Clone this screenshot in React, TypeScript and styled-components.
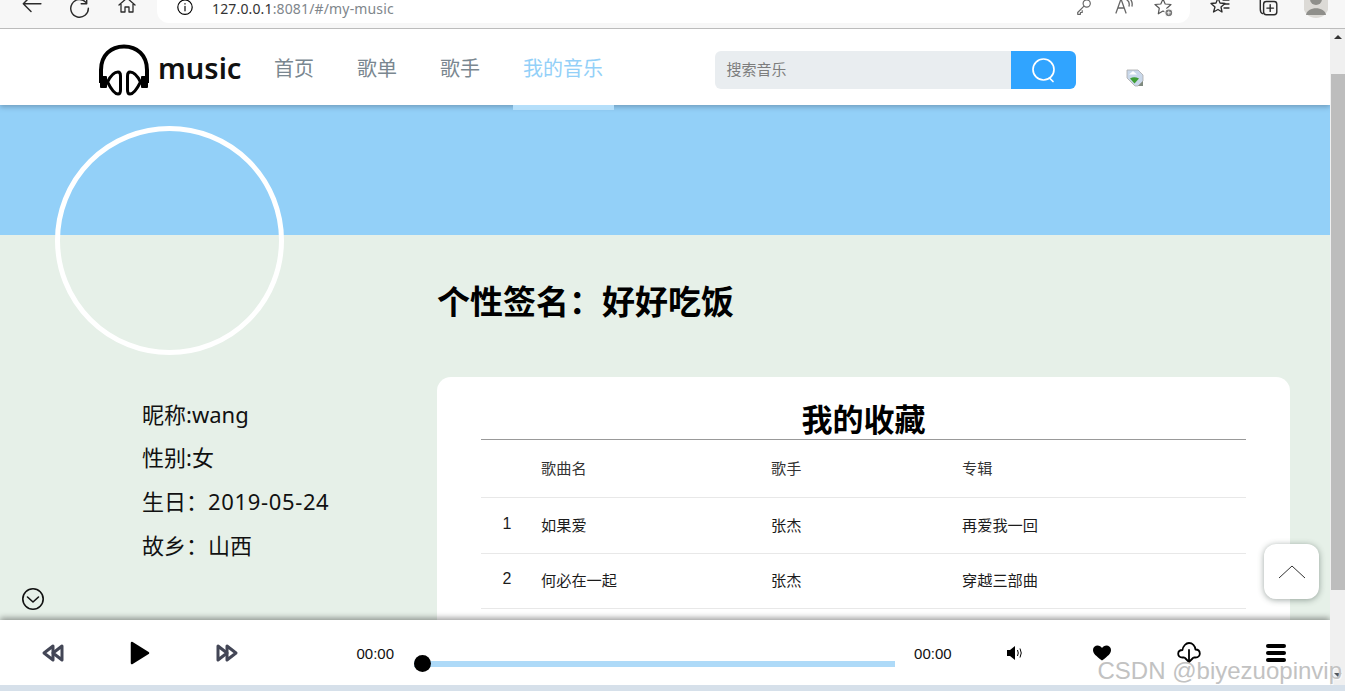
import React from 'react';
import styled, { createGlobalStyle } from 'styled-components';

const CJK = `"Noto Sans", "Noto Sans CJK SC", sans-serif`;
const ARIAL_CJK = `"Liberation Sans", "Noto Sans CJK SC", sans-serif`;

const GlobalStyle = createGlobalStyle`
  html, body {
    margin: 0;
    padding: 0;
    overflow: hidden;
    background: #d6e0ea;
  }
  * {
    box-sizing: border-box;
  }
`;

const Root = styled.div`
  width: 1345px;
  height: 691px;
  display: flex;
  flex-direction: column;
  overflow: hidden;
  position: relative;
  font-family: ${CJK};
`;

/* browser chrome */
const BrowserBar = styled.div`
  flex: 0 0 29px;
  display: flex;
  align-items: flex-start;
  padding: 0 5px 0 7px;
  background: #f7f7f7;
  border-bottom: 1px solid #bcbcbc;
  overflow: hidden;
`;

const BarSlot = styled.div`
  width: 48px;
  height: 14px;
  display: flex;
  justify-content: center;
  align-items: center;
  color: #2b2b2b;
`;

const AddressBar = styled.div`
  width: 1033px;
  height: 23px;
  margin: 0 6px;
  padding: 0 6px 0 19px;
  display: flex;
  align-items: flex-start;
  background: #fff;
  border-radius: 0 0 12px 12px;
`;

const Url = styled.div`
  margin-left: 18px;
  flex: 1;
  padding-top: 1px;
  font-size: 14px;
  line-height: 15px;
  letter-spacing: 0.15px;
  color: #80868b;
  span {
    color: #333;
  }
`;

const AddressSlot = styled.div`
  width: 40px;
  height: 16px;
  display: flex;
  justify-content: center;
  align-items: center;
  color: #666;
`;

/* page frame */
const Viewport = styled.div`
  flex: 1;
  min-height: 0;
  display: flex;
`;

const Page = styled.div`
  flex: 1;
  min-width: 0;
  display: flex;
  flex-direction: column;
  position: relative;
  overflow: hidden;
`;

const ScrollBar = styled.div`
  flex: 0 0 15px;
  display: flex;
  flex-direction: column;
  background: #f0f0f0;
`;

const ScrollArrow = styled.div<{ $down?: boolean }>`
  flex: 0 0 ${(p) => (p.$down ? '95px' : '45px')};
  display: flex;
  justify-content: center;
  align-items: ${(p) => (p.$down ? 'flex-end' : 'flex-start')};
  padding: ${(p) => (p.$down ? '0 0 8px' : '6px 0 0')};
  &::before {
    content: '';
    border-left: 4px solid transparent;
    border-right: 4px solid transparent;
    ${(p) => (p.$down ? 'border-top: 4px solid #555;' : 'border-bottom: 4px solid #333;')}
  }
`;

const ScrollThumb = styled.div`
  flex: 1;
  margin-left: 1px;
  background: #bdbdbd;
`;

const DesktopStrip = styled.div`
  flex: 0 0 6px;
  background: #d6e0ea;
`;

/* site header */
const Header = styled.header`
  flex: 0 0 76px;
  height: 76px;
  display: flex;
  align-items: flex-start;
  padding-left: 98px;
  background: #fff;
  position: relative;
  z-index: 2;
  box-shadow: 0 2px 5px rgba(60, 80, 100, 0.4);
`;

const Logo = styled.div`
  display: flex;
  align-items: center;
  gap: 8px;
  width: 165.5px;
  margin-top: 15px;
`;

const LogoText = styled.span`
  font-size: 29px;
  font-weight: 600;
  line-height: 40px;
  color: #111;
  margin-top: -5px;
`;

const Nav = styled.nav`
  display: flex;
  gap: 22px;
  height: 76px;
`;

const NavItem = styled.a<{ $active?: boolean }>`
  padding: 0 10.5px;
  display: flex;
  align-items: center;
  height: 81px;
  font-size: 20px;
  color: ${(p) => (p.$active ? '#93d0f8' : '#7a8790')};
  border-bottom: 5px solid ${(p) => (p.$active ? '#b5dffa' : 'transparent')};
`;

const Search = styled.div`
  margin: 22px 0 0 101px;
  width: 361px;
  height: 38px;
  display: flex;
  border-radius: 6px;
  overflow: hidden;
`;

const SearchInput = styled.div`
  flex: 1;
  padding: 0 0 3px 12px;
  display: flex;
  align-items: center;
  background: #e9edf0;
  color: #7d7d7d;
  font-size: 15px;
`;

const SearchButton = styled.div`
  flex: 0 0 65px;
  padding: 0 0 1px 2px;
  display: flex;
  align-items: center;
  justify-content: center;
  background: #30a4ff;
`;

const BrokenImage = styled.div`
  margin: 40px 0 0 50px;
  display: flex;
`;

/* banner and body */
const Banner = styled.div`
  flex: 0 0 130px;
  background: #93d0f8;
`;

const Avatar = styled.div`
  position: absolute;
  left: 55px;
  top: 97px;
  width: 229px;
  height: 229px;
  border: 5px solid #fff;
  border-radius: 50%;
`;

const Content = styled.main`
  flex: 1;
  min-height: 0;
  display: flex;
  background: #e6f0e8;
  overflow: hidden;
  position: relative;
`;

const Profile = styled.aside`
  flex: 0 0 437px;
  padding: 156.500px 0 0 142px;
`;

const ProfileRow = styled.div`
  height: 43.7px;
  line-height: 44px;
  font-size: 22px;
  color: #111;
  white-space: nowrap;
`;

const Digits = styled.span`
  letter-spacing: 0.65px;
`;

const Main = styled.section`
  flex: 1;
  padding-top: 45px;
`;

const Signature = styled.h2`
  margin: 0 0 53px;
  font-size: 33px;
  line-height: 44px;
  font-weight: 700;
  color: #000;
`;

const Card = styled.div`
  width: 853px;
  height: 300px;
  padding: 0 44px;
  background: #fff;
  border-radius: 14px;
`;

const CardTitle = styled.h3`
  margin: 0;
  height: 63px;
  padding-top: 20px;
  border-bottom: 1px solid #999;
  text-align: center;
  font-size: 31px;
  line-height: 44px;
  font-weight: 700;
  color: #000;
`;

const Row = styled.div<{ $head?: boolean }>`
  height: ${(p) => (p.$head ? '58px' : '55.5px')};
  padding-bottom: 3px;
  display: grid;
  grid-template-columns: 60px 230px 191px 1fr;
  align-items: center;
  border-bottom: 1px solid #e8e8e8;
  font-size: 15.2px;
  color: ${(p) => (p.$head ? '#333' : '#1c1c1c')};
  font-family: ${ARIAL_CJK};
`;

const IndexCell = styled.div`
  width: 52px;
  text-align: center;
  font-size: 16px;
`;

const FloatingTop = styled.div`
  position: absolute;
  left: 1264px;
  top: 309px;
  width: 55px;
  height: 55px;
  display: flex;
  align-items: center;
  justify-content: center;
  background: #fff;
  border-radius: 12px;
  box-shadow: 0 1px 6px rgba(40, 60, 50, 0.45);
`;

const Collapse = styled.div`
  position: absolute;
  left: 21px;
  top: 352px;
  display: flex;
`;

/* player */
const Player = styled.footer`
  flex: 0 0 65px;
  display: flex;
  align-items: center;
  padding: 1px 0 0 9.5px;
  background: #fff;
  position: relative;
  box-shadow: 0 -2px 6px rgba(0, 0, 0, 0.4);
  font-family: ${ARIAL_CJK};
`;

const ControlSlot = styled.div`
  width: 87px;
  display: flex;
  justify-content: center;
`;

const TimeLabel = styled.span<{ $offset: number }>`
  margin-left: ${(p) => p.$offset}px;
  font-size: 15px;
  color: #111;
`;

const Track = styled.div`
  margin: 21px 0 0 20px;
  width: 481px;
  height: 6px;
  background: #aedaf8;
  position: relative;
`;

const Knob = styled.div`
  position: absolute;
  left: 0;
  top: -5.5px;
  width: 17px;
  height: 17px;
  border-radius: 50%;
  background: #000;
`;

const Actions = styled.div`
  margin-left: 20px;
  display: flex;
  align-items: center;
`;

const ActionSlot = styled.div`
  width: 87px;
  display: flex;
  justify-content: center;
  align-items: center;
`;

const Watermark = styled.div`
  position: absolute;
  right: 3px;
  bottom: 7px;
  font-family: "Liberation Sans", sans-serif;
  font-size: 24px;
  line-height: 26px;
  color: #c2c2c2;
  text-shadow: 1px 1px 1px rgba(255, 255, 255, 0.8);
  white-space: nowrap;
`;

const Line = (p: { size?: number; children: React.ReactNode }) => (
  <svg width={p.size ?? 20} height={p.size ?? 20} viewBox="0 0 20 20" fill="none" stroke="currentColor" strokeWidth="1.3" strokeLinecap="round" strokeLinejoin="round">
    {p.children}
  </svg>
);

const HeadphonesLogo = () => (
  <svg width="52" height="52" viewBox="0 0 52 52" fill="none" stroke="#000" strokeLinejoin="round">
    <path d="M3 39 V26 C3 11 13 2.500 26 2.500 C39 2.500 49 11 49 26 V39" strokeWidth="4" />
    <path d="M3 33 H8 V43 H3 Z M44 33 H49 V43 H44 Z" fill="#000" strokeWidth="2" />
    <path d="M20 28 C16 28 12 33 9.500 38 C12 43 16 50 20 50 C22 50 22.500 48 22.500 46 V32 C22.500 29.500 22 28 20 28 Z" strokeWidth="3" />
    <path d="M32 28 C36 28 40 33 42.500 38 C40 43 36 50 32 50 C30 50 29.500 48 29.500 46 V32 C29.500 29.500 30 28 32 28 Z" strokeWidth="3" />
  </svg>
);

const SearchGlyph = () => (
  <svg width="26" height="26" viewBox="0 0 26 26" fill="none" stroke="#fff" strokeWidth="1.7" strokeLinecap="round">
    <circle cx="12.500" cy="12.500" r="10.500" />
    <path d="M18.500 21 L22 24.500" />
  </svg>
);

const BrokenImageGlyph = () => (
  <svg width="18" height="18" viewBox="0 0 18 18">
    <path d="M1 1 H12 L17 6 V12 L12 17 H9 L1 9 Z" fill="#c9d8ea" stroke="#a9a9a9" strokeWidth="0.8" />
    <path d="M3 5.500 L7 2 L11 5.500 Z" fill="#fff" />
    <path d="M4 9.500 Q8 7 13 9.500 L8.500 14.500 Z" fill="#3f9e35" />
    <path d="M17 12 V17 H12 Z" fill="#7f8a7f" />
  </svg>
);

const RewindGlyph = ({ flip }: { flip?: boolean }) => (
  <svg width="24" height="20" viewBox="0 0 24 20" fill="none" stroke="#434656" strokeWidth="3" strokeLinejoin="round" style={flip ? { transform: 'scaleX(-1)' } : undefined}>
    <path d="M12 3 L3 10 L12 17 Z" />
    <path d="M21 3 L12 10 L21 17 Z" />
  </svg>
);

const App: React.FC = () => (
  <Root>
    <GlobalStyle />
    <BrowserBar>
      <BarSlot>
        <Line size={22}><path d="M19 7 H3 M10 0 L3 7 L10 14" /></Line>
      </BarSlot>
      <BarSlot>
        <Line size={22}><path d="M17 2 V7 H12 M16.500 6 A8 8 0 1 0 18.500 11" /></Line>
      </BarSlot>
      <BarSlot>
        <Line size={20}><path d="M2 8 L10 1 L18 8 M4 7 V15 H8 V10 H12 V15 H16 V7" /></Line>
      </BarSlot>
      <AddressBar>
        <Line size={18}>
          <circle cx="10" cy="8" r="8" />
          <path d="M10 7 V12 M10 4 V4.500" />
        </Line>
        <Url><span>127.0.0.1</span>:8081/#/my-music</Url>
        <AddressSlot>
          <Line size={18}><circle cx="13" cy="5" r="4" /><path d="M10 8 L3 15 V17 H6 V15 H8 V13" /></Line>
        </AddressSlot>
        <AddressSlot>
          <Line size={20}><path d="M2 15 L7 1 L12 15 M4 10 H10 M13 2 Q16 4 15 8 M15 0 Q19 3 18 8" /></Line>
        </AddressSlot>
        <AddressSlot>
          <svg width="20" height="20" viewBox="0 0 20 20" fill="none" stroke="#555" strokeWidth="1.200" strokeLinejoin="round">
            <path d="M9 1 L11.200 6 L17 6.500 L12.800 10.200 L13.800 15.500 L9 13 L4.300 15.800 L5.300 10.200 L1 6.500 L6.800 6 Z" />
            <circle cx="14.800" cy="14.800" r="4" fill="#777" stroke="#fff" />
            <path d="M12.800 14.800 H16.800 M14.800 12.800 V16.800" stroke="#fff" strokeWidth="0.900" />
          </svg>
        </AddressSlot>
      </AddressBar>
      <BarSlot>
        <Line size={20}>
          <path d="M8 1 L10 6 L15 6.500 L11 10 L12 15 L8 12.500 L3.500 15 L5 10 L1 6.500 L6 6 Z" />
          <path d="M13 3 H19 M14 7 H19 M14 11 H19" />
        </Line>
      </BarSlot>
      <BarSlot>
        <Line size={22}>
          <rect x="6" y="5" width="12" height="12" rx="2.500" />
          <path d="M12 8 V14 M9 11 H15 M3 3 V12 Q3 15 5 16" />
        </Line>
      </BarSlot>
      <BarSlot>
        <svg width="24" height="24" viewBox="0 0 24 24">
          <circle cx="12" cy="10" r="13" fill="#dcdad6" />
          <circle cx="12" cy="4" r="6" fill="#8f8f8b" />
          <path d="M2 20 C3 11 21 11 22 20 Z" fill="#8f8f8b" />
        </svg>
      </BarSlot>
    </BrowserBar>

    <Viewport>
      <Page>
        <Header>
          <Logo>
            <HeadphonesLogo />
            <LogoText>music</LogoText>
          </Logo>
          <Nav>
            <NavItem>首页</NavItem>
            <NavItem>歌单</NavItem>
            <NavItem>歌手</NavItem>
            <NavItem $active>我的音乐</NavItem>
          </Nav>
          <Search>
            <SearchInput>搜索音乐</SearchInput>
            <SearchButton><SearchGlyph /></SearchButton>
          </Search>
          <BrokenImage><BrokenImageGlyph /></BrokenImage>
        </Header>
        <Banner />
        <Content>
          <Profile>
            <ProfileRow>昵称:wang</ProfileRow>
            <ProfileRow>性别:女</ProfileRow>
            <ProfileRow>生日：<Digits>2019-05-24</Digits></ProfileRow>
            <ProfileRow>故乡：山西</ProfileRow>
          </Profile>
          <Main>
            <Signature>个性签名：好好吃饭</Signature>
            <Card>
              <CardTitle>我的收藏</CardTitle>
              <Row $head>
                <div />
                <div>歌曲名</div>
                <div>歌手</div>
                <div>专辑</div>
              </Row>
              <Row>
                <IndexCell>1</IndexCell>
                <div>如果爱</div>
                <div>张杰</div>
                <div>再爱我一回</div>
              </Row>
              <Row>
                <IndexCell>2</IndexCell>
                <div>何必在一起</div>
                <div>张杰</div>
                <div>穿越三部曲</div>
              </Row>
            </Card>
          </Main>
          <Collapse>
            <svg width="24" height="24" viewBox="0 0 24 24" fill="none" stroke="#111" strokeWidth="1.600" strokeLinecap="round" strokeLinejoin="round">
              <circle cx="12" cy="12" r="10.200" />
              <path d="M6.500 10 L12 15 L17.500 10" />
            </svg>
          </Collapse>
          <FloatingTop>
            <svg width="28" height="16" viewBox="0 0 28 16" fill="none" stroke="#333" strokeWidth="1">
              <path d="M1 14 L14 2 L27 14" />
            </svg>
          </FloatingTop>
        </Content>
        <Player>
          <ControlSlot><RewindGlyph /></ControlSlot>
          <ControlSlot>
            <svg width="20" height="24" viewBox="0 0 20 24">
              <path d="M2 2 L18 12 L2 22 Z" fill="#000" stroke="#000" strokeWidth="2.500" strokeLinejoin="round" />
            </svg>
          </ControlSlot>
          <ControlSlot><RewindGlyph flip /></ControlSlot>
          <TimeLabel $offset={86}>00:00</TimeLabel>
          <Track><Knob /></Track>
          <TimeLabel $offset={19}>00:00</TimeLabel>
          <Actions>
            <ActionSlot>
              <svg width="18" height="16" viewBox="0 0 18 16">
                <path d="M1 5 H4 L9 1 V15 L4 11 H1 Z" fill="#000" />
                <path d="M11.500 5 Q13 8 11.500 11 M14 3.500 Q16.500 8 14 12.500" fill="none" stroke="#000" strokeWidth="1" />
              </svg>
            </ActionSlot>
            <ActionSlot>
              <svg width="18" height="16" viewBox="0 0 18 16">
                <path d="M9 15.500 C3 11 0 8.500 0 5 C0 2 2.300 0.500 4.500 0.500 C6.500 0.500 8 1.500 9 3 C10 1.500 11.500 0.500 13.500 0.500 C15.700 0.500 18 2 18 5 C18 8.500 15 11 9 15.500 Z" fill="#000" />
              </svg>
            </ActionSlot>
            <ActionSlot>
              <svg width="24" height="22" viewBox="0 0 24 22" fill="none" stroke="#000" strokeWidth="1.800" strokeLinecap="round" strokeLinejoin="round">
                <path d="M7 15.500 H5.500 C-0.500 15.500 0 8 5.500 8 C6 4 9 1 12 1 C15.500 1 18 4 18.500 7.500 C24 7.500 24.500 15.500 18.500 15.500 H17" />
                <path d="M12 8 V20 M8 16 L12 20 L16 16" />
              </svg>
            </ActionSlot>
            <ActionSlot>
              <svg width="20" height="18" viewBox="0 0 20 18" fill="#000">
                <rect x="0" y="0" width="20" height="4" rx="2" />
                <rect x="0" y="7" width="20" height="4" rx="2" />
                <rect x="0" y="14" width="20" height="4" rx="2" />
              </svg>
            </ActionSlot>
          </Actions>
        </Player>
        <Avatar />
      </Page>
      <ScrollBar>
        <ScrollArrow />
        <ScrollThumb />
        <ScrollArrow $down />
      </ScrollBar>
    </Viewport>
    <DesktopStrip />
    <Watermark>CSDN @biyezuopinvip</Watermark>
  </Root>
);

export default App;
